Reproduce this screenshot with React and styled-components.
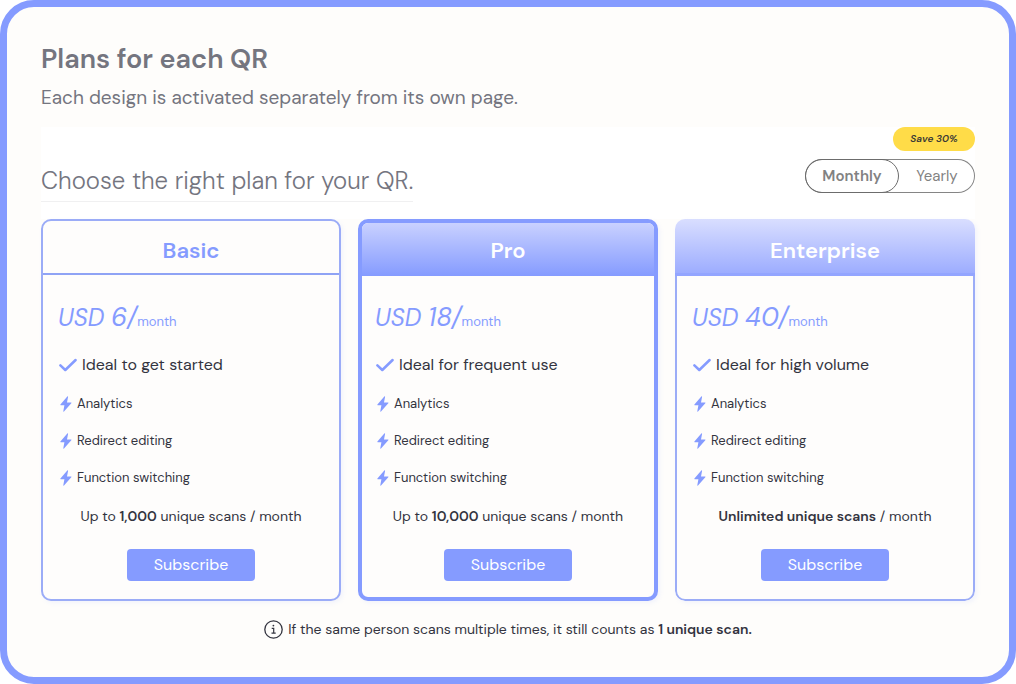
import React, { useState } from "react";
import styled, { createGlobalStyle, css } from "styled-components";

const GlobalStyle = createGlobalStyle`
  *, *::before, *::after { box-sizing: border-box; }
  body {
    margin: 0;
    background: #ffffff;
    color: #33343f;
    font-family: "DM Sans", Inter, "Open Sans", sans-serif;
    font-size: 13px;
    line-height: 20px;
  }
  h1, h2, h3, p, ul { margin: 0; padding: 0; }
  button { font: inherit; cursor: pointer; }
`;

const Frame = styled.main`
  display: flex;
  flex-direction: column;
  min-height: 100vh;
  padding: 34px 34px 24px;
  border: 7px solid #859bff;
  border-radius: 34px;
  background: #fefdfb;
`;

const Title = styled.h1`
  color: #74757f;
  font-size: 27px;
  font-weight: 600;
  line-height: 36px;
`;

const Subtitle = styled.p`
  margin-top: 8px;
  color: #74757f;
  font-size: 19px;
  line-height: 26px;
`;

const Chooser = styled.section`
  display: flex;
  align-items: flex-end;
  justify-content: space-between;
  margin-top: 16px;
  padding-bottom: 17px;
  background: #ffffff;
`;

const ChooserTitle = styled.h2`
  padding-bottom: 4px;
  border-bottom: 1px solid #f0f0f1;
  color: #74757f;
  font-size: 24px;
  font-weight: 300;
  line-height: 32px;
`;

const Billing = styled.div`
  display: flex;
  flex-direction: column;
  align-items: flex-end;
  gap: 8px;
  padding-bottom: 9px;
`;

const SaveBadge = styled.span`
  width: 82px;
  border-radius: 12px;
  background: #ffdc48;
  color: #3b3a36;
  font-size: 10px;
  font-style: italic;
  font-weight: 600;
  line-height: 24px;
  text-align: center;
`;

const Toggle = styled.div`
  display: flex;
  height: 34px;
  border-radius: 17px;
  box-shadow: inset 0 0 0 1px #858585;
`;

const ToggleOption = styled.button`
  width: ${(p) => (p.$active ? "94px" : "76px")};
  padding: 0;
  border: 1px solid ${(p) => (p.$active ? "#6c6c6c" : "transparent")};
  border-radius: 17px;
  background: transparent;
  color: #828282;
  font-size: 15px;
  font-weight: ${(p) => (p.$active ? 600 : 400)};
`;

const Plans = styled.div`
  display: grid;
  grid-template-columns: repeat(3, minmax(0, 1fr));
  gap: 17px;
`;

const headerLook = {
  plain: css`
    height: 54px;
    padding-top: 8px;
    border-bottom: 2px solid #8fa3f5;
    color: #859bff;
  `,
  strong: css`
    height: 53px;
    padding-top: 2px;
    background: linear-gradient(#c9d1ff, #859bff);
    color: #ffffff;
  `,
  soft: css`
    height: 57px;
    padding-top: 10px;
    border-bottom: 3px solid #93a5ff;
    background: linear-gradient(#d9deff, #9dadff);
    color: #ffffff;
  `,
};

const CardHeader = styled.h3`
  display: flex;
  align-items: center;
  justify-content: center;
  font-size: 22px;
  font-weight: 600;
  line-height: 28px;
  ${(p) => headerLook[p.$look]}
`;

const CardBody = styled.div`
  display: flex;
  flex-direction: column;
`;

const cardLook = {
  plain: css`
    border: 2px solid #9bacf7;
    ${CardBody} { padding: 26px 15px 18px; }
  `,
  strong: css`
    border: 4px solid #859bff;
    ${CardBody} { padding: 25px 13px 16px; }
  `,
  soft: css`
    ${CardBody} {
      padding: 25px 15px 18px;
      border: 2px solid #9bacf7;
      border-top: 0;
      border-radius: 0 0 10px 10px;
    }
  `,
};

const Card = styled.article`
  overflow: hidden;
  border-radius: 10px;
  background: #fefdfc;
  box-shadow: 2px 2px 4px rgba(133, 155, 255, 0.1);
  ${(p) => cardLook[p.$look]}
`;

const Price = styled.p`
  display: flex;
  align-items: baseline;
  color: #859bff;
  white-space: pre;
`;

const Currency = styled.em`
  font-size: 24px;
  line-height: 28px;
`;

const Amount = styled.em`
  font-size: 26px;
  line-height: 32px;
`;

const Tagline = styled.p`
  display: flex;
  align-items: center;
  gap: 5px;
  margin-top: 20px;
  font-size: 16px;
  line-height: 24px;

  svg { flex: none; margin-left: 1px; }
`;

const Features = styled.ul`
  display: flex;
  flex-direction: column;
  gap: 17px;
  margin-top: 17px;
  list-style: none;
`;

const Feature = styled.li`
  display: flex;
  align-items: center;
  gap: 5px;

  svg { flex: none; margin-left: 2px; }
`;

const Scans = styled.p`
  margin-top: 18px;
  font-size: 14px;
  text-align: center;

  strong { font-weight: 600; }
`;

const Subscribe = styled.button`
  align-self: center;
  width: 128px;
  height: 32px;
  margin-top: 23px;
  padding: 0;
  border: 0;
  border-radius: 4px;
  background: #859bff;
  color: #ffffff;
  font-size: 16px;
`;

const Note = styled.p`
  display: flex;
  align-items: center;
  justify-content: center;
  gap: 5px;
  margin-top: 18px;
  font-size: 14px;

  strong { font-weight: 600; }
`;

const CheckIcon = () => (
  <svg width="18" height="14" viewBox="0 0 18 14" fill="none" aria-hidden="true">
    <path d="M1.4 7.4 6.3 12 16.6 2" stroke="#859bff" strokeWidth="2.5" strokeLinecap="round" strokeLinejoin="round" />
  </svg>
);

const BoltIcon = () => (
  <svg width="12" height="16" viewBox="0 0 12 16" aria-hidden="true">
    <path d="M7.3.4.4 8.6c-.2.3-.1.6.3.6h3.7L3.3 15.2c-.1.5.4.7.7.3l7.3-8.3c.3-.3.1-.7-.3-.7H7L8.1.8C8.2.3 7.6 0 7.3.4Z" fill="#859bff" />
  </svg>
);

const InfoIcon = () => (
  <svg width="19" height="19" viewBox="0 0 19 19" fill="none" stroke="#33343f" aria-hidden="true">
    <circle cx="9.5" cy="9.5" r="8.7" strokeWidth="1.3" />
    <path d="M7.7 8.3h2v4.900M7.5 13.2h4.2" strokeWidth="1.2" />
    <circle cx="9.4" cy="5.6" r=".9" fill="#33343f" stroke="none" />
  </svg>
);

const features = ["Analytics", "Redirect editing", "Function switching"];

const plans = [
  {
    name: "Basic",
    look: "plain",
    price: 6,
    tagline: "Ideal to get started",
    scans: <>Up to <strong>1,000</strong> unique scans / month</>,
  },
  {
    name: "Pro",
    look: "strong",
    price: 18,
    tagline: "Ideal for frequent use",
    scans: <>Up to <strong>10,000</strong> unique scans / month</>,
  },
  {
    name: "Enterprise",
    look: "soft",
    price: 40,
    tagline: "Ideal for high volume",
    scans: <><strong>Unlimited unique scans</strong> / month</>,
  },
];

function PlanCard({ plan }) {
  return (
    <Card $look={plan.look}>
      <CardHeader $look={plan.look}>{plan.name}</CardHeader>
      <CardBody>
        <Price>
          <Currency>USD </Currency>
          <Amount>{plan.price}/</Amount>
          <span>month</span>
        </Price>
        <Tagline><CheckIcon />{plan.tagline}</Tagline>
        <Features>
          {features.map((f) => (
            <Feature key={f}><BoltIcon />{f}</Feature>
          ))}
        </Features>
        <Scans>{plan.scans}</Scans>
        <Subscribe type="button">Subscribe</Subscribe>
      </CardBody>
    </Card>
  );
}

export default function App() {
  const [period, setPeriod] = useState("Monthly");
  return (
    <>
      <GlobalStyle />
      <Frame>
        <Title>Plans for each QR</Title>
        <Subtitle>Each design is activated separately from its own page.</Subtitle>
        <Chooser>
          <ChooserTitle>Choose the right plan for your QR.</ChooserTitle>
          <Billing>
            <SaveBadge>Save 30%</SaveBadge>
            <Toggle role="group" aria-label="Billing period">
              {["Monthly", "Yearly"].map((name) => (
                <ToggleOption
                  key={name}
                  type="button"
                  $active={period === name}
                  aria-pressed={period === name}
                  onClick={() => setPeriod(name)}
                >
                  {name}
                </ToggleOption>
              ))}
            </Toggle>
          </Billing>
        </Chooser>
        <Plans>
          {plans.map((plan) => <PlanCard key={plan.name} plan={plan} />)}
        </Plans>
        <Note>
          <InfoIcon />
          <span>If the same person scans multiple times, it still counts as <strong>1 unique scan.</strong></span>
        </Note>
      </Frame>
    </>
  );
}
